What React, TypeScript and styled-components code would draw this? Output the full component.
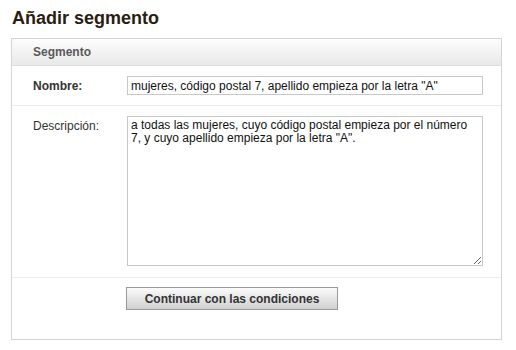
import styled, { createGlobalStyle } from "styled-components";

const Global = createGlobalStyle`
  body {
    margin: 0;
    background: #fff;
    font-family: "Liberation Sans", Arial, sans-serif;
  }
`;

const Page = styled.div`
  width: 516px;
  height: 350px;
  padding: 8px 0 0 11px;
  box-sizing: border-box;
`;

const Title = styled.h1`
  margin: 0 0 0 1px;
  font-size: 18px;
  line-height: 20px;
  font-weight: bold;
  color: #2b1d10;
`;

const Panel = styled.div`
  margin-top: 10px;
  width: 491px;
  height: 302px;
  box-sizing: border-box;
  border: 1px solid #d4d4d4;
  display: flex;
  flex-direction: column;
`;

const PanelHeader = styled.div`
  height: 26px;
  padding-left: 21px;
  display: flex;
  align-items: center;
  font-size: 12px;
  font-weight: bold;
  color: #5a5a5a;
  background: linear-gradient(#fdfdfd, #e9e9e9);
  border-bottom: 1px solid #dcdcdc;
`;

const Row = styled.div<{ $h: number }>`
  height: ${(p) => p.$h}px;
  display: grid;
  grid-template-columns: 94px 356px;
  padding-left: 21px;
  border-bottom: 1px solid #ececec;
  box-sizing: border-box;
`;

const Label = styled.label<{ $bold?: boolean; $top: number }>`
  padding-top: ${(p) => p.$top}px;
  font-size: 12px;
  font-weight: ${(p) => (p.$bold ? "bold" : "normal")};
  color: #333;
`;

const TextInput = styled.input`
  margin-top: 10px;
  height: 19px;
  box-sizing: border-box;
  border: 1px solid #c8c8c8;
  padding: 0 3px;
  font-family: "Liberation Sans", Arial, sans-serif;
  font-size: 12px;
  color: #111;
  outline: none;
`;

const TextArea = styled.textarea`
  margin-top: 10px;
  height: 150px;
  box-sizing: border-box;
  border: 1px solid #c8c8c8;
  padding: 2px 3px;
  font-family: "Liberation Sans", Arial, sans-serif;
  font-size: 12px;
  line-height: 13px;
  color: #111;
  resize: both;
  outline: none;
`;

const Actions = styled.div`
  padding: 9px 0 0 114px;
`;

const Button = styled.button`
  width: 212px;
  height: 23px;
  border: 1px solid #9a9a9a;
  background: linear-gradient(#fbfbfb, #d0d0d0);
  font-family: "Liberation Sans", Arial, sans-serif;
  font-size: 12px;
  font-weight: bold;
  color: #333;
  padding: 0;
`;

export default function App() {
  return (
    <Page>
      <Global />
      <Title>Añadir segmento</Title>
      <Panel>
        <PanelHeader>Segmento</PanelHeader>
        <Row $h={40}>
          <Label $bold $top={13}>Nombre:</Label>
          <TextInput
            defaultValue={'mujeres, código postal 7, apellido empieza por la letra "A"'}
          />
        </Row>
        <Row $h={172}>
          <Label $top={13}>Descripción:</Label>
          <TextArea
            defaultValue={
              'a todas las mujeres, cuyo código postal empieza por el número 7, y cuyo apellido empieza por la letra "A".'
            }
          />
        </Row>
        <Actions>
          <Button>Continuar con las condiciones</Button>
        </Actions>
      </Panel>
    </Page>
  );
}
